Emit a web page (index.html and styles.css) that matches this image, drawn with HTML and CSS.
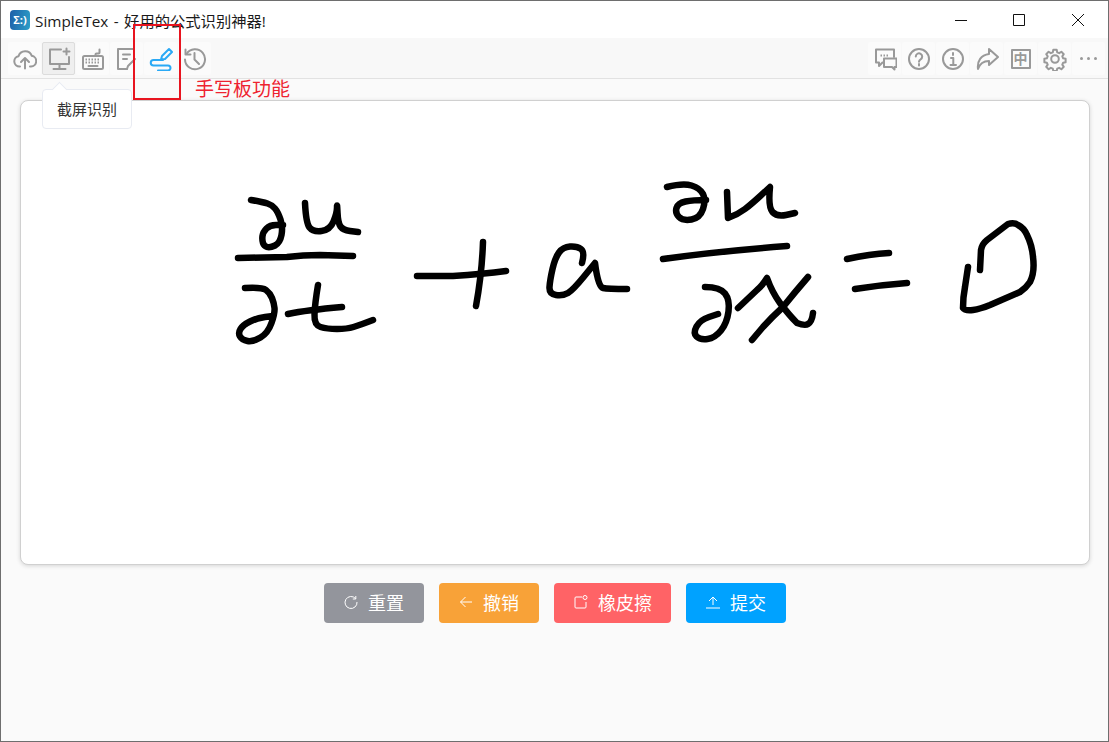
FILE: index.html
```html
<!DOCTYPE html>
<html>
<head>
    <title>SimpleTex</title>
    <link rel="stylesheet" href="styles.css">
</head>
<body>
    <div class="window">
        <div class="titlebar">
            <div class="logo">Σ:)</div>
            <div class="title">SimpleTex - 好用的公式识别神器!</div>
            <div class="controls">
                <div class="control"><svg width="14" height="14" viewBox="0 0 14 14"><path d="M1 7.500h12"/></svg></div>
                <div class="control"><svg width="14" height="14" viewBox="0 0 14 14"><path d="M1.500 1.500h11v11h-11z"/></svg></div>
                <div class="control"><svg width="14" height="14" viewBox="0 0 14 14"><path d="M1 1l12 12M13 1L1 13"/></svg></div>
            </div>
        </div>

        <div class="toolbar">
            <div class="tool-group">
                <div class="tool"><svg class="icon" viewBox="0 0 24 24"><path d="M7 19.500H6.500a5.200 5.200 0 0 1-1-10.300A7 7 0 0 1 18.800 8.800 5.400 5.400 0 0 1 18 19.500h-1"/><path d="M12 21.500v-10M8 15l4-4 4 4"/></svg></div>
                <div class="tool active"><svg class="icon" viewBox="0 0 24 24"><path d="M14 2.500H3v14.500h19V10"/><path d="M12.500 17v5M6.500 22h12M19.500 1.500v6M16.500 4.500h6"/></svg></div>
                <div class="tool"><svg class="icon" viewBox="0 0 24 24"><rect x="2" y="9" width="20" height="13" rx="1.500"/><path d="M14.500 9V7.500a1 1 0 0 1 1-1h2a1 1 0 0 0 1-1V2.500"/><path class="keys" d="M4.500 12.500h15M4.500 15.500h15"/><path d="M7.500 19h9"/></svg></div>
                <div class="tool"><svg class="icon" viewBox="0 0 24 24"><path d="M12 22H3V2h16v8"/><path d="M8 7.500h7M8 12h4"/><path d="M12 22l1-3 7-7"/></svg></div>
                <div class="tool"><svg class="icon icon-blue" viewBox="0 0 24 24"><path d="M12 12.500l1-3.500 7-7 3 3-7 7z"/><path d="M14 13H4.500a2.750 2.750 0 0 0 0 5.500H19a2.500 2.500 0 0 1 0 5H9"/></svg></div>
                <div class="tool"><svg class="icon" viewBox="0 0 24 24"><path d="M3.500 7A10 10 0 1 1 2 12.500"/><path d="M2.500 2.500v5h5"/><path d="M11.500 6v6.500L16 17"/></svg></div>
            </div>
            <div class="tool-group">
                <div class="tool"><svg class="icon" viewBox="0 0 24 24"><path d="M21 10V2.500H3v13h3V19l3.500-3.500H11"/><path d="M11 11.500h12.500V20h-2v2.500L19 20h-8z"/><path class="keys" d="M7.500 8.500h9"/></svg></div>
                <div class="tool"><svg class="icon" viewBox="0 0 24 24"><circle cx="12" cy="12" r="10"/><path d="M8.800 9.500a3.200 3.200 0 1 1 4.800 2.800c-1 .6-1.600 1.200-1.600 2.400"/><path d="M12 17v1.500"/></svg></div>
                <div class="tool"><svg class="icon" viewBox="0 0 24 24"><circle cx="12" cy="12" r="10"/><path d="M12 6v2M10 11h2.300v7M9.500 18h5.500"/></svg></div>
                <div class="tool"><svg class="icon" viewBox="0 0 24 24"><path d="M14 2l9 8-9 8v-4C9 14 5 16 3 22 2 14 6 8 14 7z"/></svg></div>
                <div class="tool"><div class="lang">中</div></div>
                <div class="tool"><svg class="icon" viewBox="0 0 24 24"><path vector-effect="non-scaling-stroke" d="M10 1.500h4l.6 3 2.300 1 2.600-1.700 2.800 2.800-1.700 2.600 1 2.300 2.900.6v4l-2.900.6-1 2.300 1.700 2.600-2.800 2.800-2.600-1.700-2.300 1-.6 2.800h-4l-.6-2.800-2.300-1-2.600 1.700-2.800-2.800 1.700-2.600-1-2.300-2.900-.6v-4l2.900-.6 1-2.300-1.700-2.600 2.800-2.800 2.600 1.700 2.300-1z" transform="translate(1.800 1.500) scale(.85)"/><circle cx="12" cy="12" r="3.800"/></svg></div>
                <div class="tool"><div class="more"><span></span><span></span><span></span></div></div>
            </div>
        </div>

        <div class="content">
            <div class="board">
                <svg class="strokes" viewBox="21 101 1068 463">
                    <path d="M251 200Q263 202 267.500 203.500Q272 205 275 208.500Q278 212 280.500 219.500Q283 227 281.500 235Q280 243 275 245.500Q270 248 267 247Q264 246 263 243Q262 240 262.500 236Q263 232 266.500 228.500Q270 225 276 225L283 225"/>
                    <path d="M305 203Q306 223 309.500 227.500Q313 232 321.500 231Q330 230 333.500 221.500Q337 213 337 207.500Q337 202 337.500 212.500Q338 223 340.500 226.500Q343 230 350 231L358 232"/>
                    <path d="M238 258L287 257Q303 255 320 255L353 256"/>
                    <path d="M245 288Q262 287 266 290Q270 293 272 298Q274 303 274.500 308Q275 313 271.500 323Q268 333 260.500 337.500Q253 342 247.500 341Q242 340 240 336.500Q238 333 240.500 329Q243 325 250 321.500Q257 318 265 317L273 316"/>
                    <path d="M318 285Q315 303 314.500 314Q314 325 320.500 327Q327 329 337 329Q347 329 353.500 327Q360 325 373 320"/>
                    <path d="M288 314Q307 310 342 307"/>
                    <path d="M417 276L453 276Q483 274 506 271"/>
                    <path d="M483 242Q482 273 476 306"/>
                    <path d="M582 263Q585 252 581 249Q577 246 570 246.500Q563 247 559 252.500Q555 258 552.500 269Q550 280 549.500 287Q549 294 556 295Q563 296 568 293Q573 290 584 276.500L595 263Q598 287 603 288Q608 289 627 289"/>
                    <path d="M667 187Q683 183 691.500 185.500Q700 188 703 194Q706 200 703 209Q700 218 691.500 219.500Q683 221 679 217Q675 213 676.500 208Q678 203 685.500 201.500Q693 200 706 200"/>
                    <path d="M727 192L728 218Q737 215 745 209Q753 203 770 187Q768 207 772.500 212Q777 217 786 215L795 213"/>
                    <path d="M663 259Q720 251 787 246"/>
                    <path d="M705 287Q720 287 725 293.500Q730 300 728.500 311.500Q727 323 721 330.500Q715 338 707.500 339Q700 340 696.500 336.500Q693 333 696.500 326.500Q700 320 709 317L718 314"/>
                    <path d="M738 308L757 290Q762 286 767 278Q772 292 780 303Q789 315 797 323Q805 326 808 324Q812 322 813 313"/>
                    <path d="M808 277Q795 292 783 307Q772 317 763 327L752 340"/>
                    <path d="M847 259Q870 254 889 253"/>
                    <path d="M855 289Q880 285 907 283"/>
                    <path d="M980 270L981 250Q982 244 987 240L1008 224Q1014 222 1018 225Q1024 228 1027 235Q1032 245 1033 257Q1035 272 1030 282Q1026 288 1020 292L990 305Q980 309 973 310Q965 311 963 308Q963 297 965 287L968 267"/>
                </svg>
            </div>
            <div class="actions">
                <button class="btn btn-gray"><svg class="btn-icon" viewBox="0 0 14 14"><path d="M11.500 3.500A6 6 0 1 0 13 7"/><path d="M11.800 1v3h-3"/></svg>重置</button>
                <button class="btn btn-orange"><svg class="btn-icon" viewBox="0 0 14 14"><path d="M13 7H1.500M6.500 2L1.500 7l5 5"/></svg>撤销</button>
                <button class="btn btn-red"><svg class="btn-icon" viewBox="0 0 14 14"><path d="M8 2H2a1 1 0 0 0-1 1v9a1 1 0 0 0 1 1h9a1 1 0 0 0 1-1V7"/><circle cx="11" cy="2.500" r="2"/></svg>橡皮擦</button>
                <button class="btn btn-blue"><svg class="btn-icon" viewBox="0 0 14 14"><path d="M0 13h14M7 10V2M3 6l4-4 4 4"/></svg>提交</button>
            </div>
        </div>

        <!-- annotation and tooltip sit on top of everything -->
        <div class="tooltip">截屏识别</div>
        <div class="mark"></div>
        <div class="mark-label">手写板功能</div>
    </div>
</body>
</html>
```

FILE: styles.css
```css
* {
    box-sizing: border-box;
}
body {
    margin: 0;
    font-family: "Open Sans", "Noto Sans CJK SC", sans-serif;
}
.window {
    position: relative;
    width: 1109px;
    height: 742px;
    border: 1px solid #6e6e6e;
    background: #fafafa;
    overflow: hidden;
}
.titlebar {
    height: 37px;
    background: white;
    display: flex;
    align-items: center;
    padding-left: 9px;
    color: #1a1a1a;
}
.logo {
    width: 20px;
    height: 20px;
    border-radius: 4px;
    background: linear-gradient(100deg, #1e5ea8, #2c9fc8);
    color: white;
    font-size: 11px;
    font-weight: 700;
    line-height: 20px;
    text-align: center;
    white-space: nowrap;
    overflow: hidden;
}
.title {
    margin-left: 5px;
    font-size: 15.300px;
    word-spacing: 1.500px;
    white-space: nowrap;
}
.controls {
    margin-left: auto;
    display: flex;
    padding-right: 1px;
}
.control {
    width: 58.500px;
    height: 37px;
    display: flex;
    align-items: center;
    justify-content: center;
}
.control svg {
    fill: none;
    stroke: #111;
    stroke-width: 1;
}
.toolbar {
    height: 41px;
    background: #f8f8f8;
    border-bottom: 1px solid #e2e2e2;
    display: flex;
    justify-content: space-between;
    padding: 4px 3px 0 7px;
}
.tool-group {
    display: flex;
    gap: 1px;
}
.tool {
    width: 33px;
    height: 33px;
    background: #fbfbfb;
    border-radius: 2px;
    display: flex;
    align-items: center;
    justify-content: center;
}
.tool.active {
    background: #efefef;
    border: 1px solid #dcdcdc;
}
.icon {
    width: 24px;
    height: 24px;
    flex-shrink: 0;
    fill: none;
    stroke: #999;
    stroke-width: 2;
    stroke-linecap: round;
    stroke-linejoin: round;
}
.icon-blue {
    stroke: #2aa9f5;
}
.keys {
    stroke-width: 2;
    stroke-dasharray: 1.500 1.500;
    stroke-linecap: butt;
}
.lang {
    width: 20px;
    height: 20px;
    border: 2px solid #999;
    border-radius: 1px;
    color: #999;
    font-size: 14px;
    font-weight: 700;
    line-height: 15px;
    text-align: center;
}
.more {
    display: flex;
    gap: 4px;
}
.more span {
    width: 3px;
    height: 3px;
    border-radius: 50%;
    background: #999;
}
.content {
    padding: 21px 18px 0 19px;
}
.board {
    height: 465px;
    background: white;
    border: 1px solid #d0d0d0;
    border-radius: 8px;
    box-shadow: 0 1px 4px rgba(0,0,0,0.15);
}
.strokes {
    display: block;
    width: 100%;
    height: 100%;
    fill: none;
    stroke: #000;
    stroke-width: 6.500;
    stroke-linecap: round;
    stroke-linejoin: round;
    filter: blur(0.4px);
}
.actions {
    margin-top: 18px;
    display: flex;
    justify-content: center;
    gap: 15px;
}
.btn {
    height: 40px;
    padding: 0 20px 2px;
    border: none;
    border-radius: 4px;
    color: white;
    font-family: inherit;
    font-size: 18px;
    display: flex;
    align-items: center;
    gap: 10px;
}
.btn-icon {
    width: 14px;
    height: 14px;
    fill: none;
    stroke: white;
    stroke-width: 1;
}
.btn-gray {
    background: #93959c;
}
.btn-orange {
    background: #f8a238;
}
.btn-red {
    background: #ff6366;
    padding-right: 19px;
}
.btn-blue {
    background: #00a2ff;
}
.tooltip {
    position: absolute;
    left: 41px;
    top: 88px;
    width: 90px;
    height: 40px;
    background: white;
    border: 1px solid #e8ebf2;
    border-radius: 4px;
    color: #333;
    font-size: 15px;
    line-height: 38px;
    text-align: center;
}
.tooltip::before {
    content: "";
    position: absolute;
    left: 11px;
    top: -6px;
    width: 10px;
    height: 10px;
    background: white;
    border-left: 1px solid #e8ebf2;
    border-top: 1px solid #e8ebf2;
    transform: rotate(45deg);
}
.mark {
    position: absolute;
    left: 132px;
    top: 23px;
    width: 48px;
    height: 76px;
    border: 2px solid #e8141f;
}
.mark-label {
    position: absolute;
    left: 194px;
    top: 74px;
    color: #ee2330;
    font-size: 19px;
    line-height: 28px;
    white-space: nowrap;
}
```
